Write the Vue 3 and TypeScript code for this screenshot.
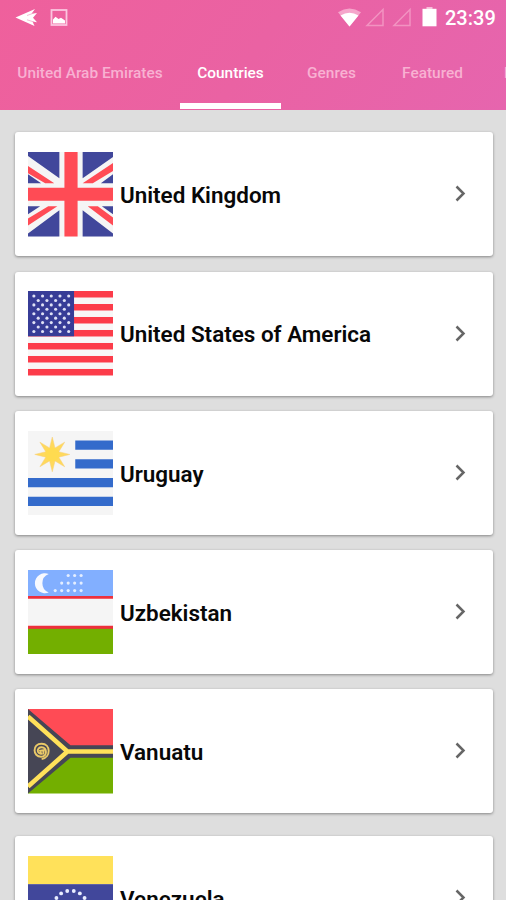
<script setup lang="ts">
interface Country {
  code: string
  name: string
}

interface Dot {
  x: number
  y: number
}

const tabs: string[] = ['United Arab Emirates', 'Countries', 'Genres', 'Featured', 'Popular']
const activeTab = 'Countries'

const countries: Country[] = [
  { code: 'gb', name: 'United Kingdom' },
  { code: 'us', name: 'United States of America' },
  { code: 'uy', name: 'Uruguay' },
  { code: 'uz', name: 'Uzbekistan' },
  { code: 'vu', name: 'Vanuatu' },
  { code: 've', name: 'Venezuela' },
]

const usStars: Dot[] = []
for (let row = 0; row < 9; row++) {
  const odd = row % 2 === 1
  for (let col = 0; col < (odd ? 4 : 5); col++) {
    usStars.push({ x: 5.8 + col * 8.6 + (odd ? 4.3 : 0), y: 5 + row * 4.4 })
  }
}

const uzStars: Dot[] = [3, 4, 5].flatMap((count, row) =>
  Array.from({ length: count }, (_, i) => ({ x: 52.5 - i * 6.4, y: 5.5 + row * 7.5 })),
)

const veStars: Dot[] = Array.from({ length: 12 }, (_, i) => {
  const angle = -Math.PI / 2 + ((i - 5.5) * Math.PI) / 8.2
  return { x: 42 + Math.cos(angle) * 17, y: 51.5 + Math.sin(angle) * 17 }
})

const sunPoints: string = Array.from({ length: 16 }, (_, i) => {
  const radius = i % 2 === 0 ? 17.3 : 7
  const angle = (i * Math.PI) / 8
  return `${(24 + Math.sin(angle) * radius).toFixed(2)},${(23.3 - Math.cos(angle) * radius).toFixed(2)}`
}).join(' ')
</script>

<template>
  <div class="screen">
    <header class="header">
      <div class="status">
        <svg class="status-left" width="56" height="22" viewBox="0 0 56 22">
          <path d="M0.500 10.500 20 2 16.500 6.800 22 6 18 10.700 22 15.200 17.500 14.500 19.500 19Z" fill="#fff" />
          <path d="M12 8.500 19 6M12 12.800 19 15" stroke="#f39cc4" stroke-width=".7" />
          <rect x="36.500" y="3" width="15" height="15" fill="none" stroke="#fbc5df" stroke-width="1.800" />
          <path d="M38 16.500V12.500L40.500 9.700 43.500 12 46 10.800 50 13.500V16.500Z" fill="#fff" />
        </svg>
        <svg class="status-right" width="102" height="22" viewBox="0 0 102 22">
          <path d="M1 5.2Q12.500-2 24 5.200L12.500 19.500Z" fill="#f5a6cb" />
          <path d="M3.500 8.500Q12.500 3 21.500 8.500L12.500 19.500Z" fill="#fff" />
          <path d="M30 18.500H46V2.500ZM57 18.500H73V2.500Z" fill="none" stroke="#f293c1" stroke-width="1.500" />
          <rect x="89.500" y="0" width="6" height="2" fill="#f8bfda" />
          <rect x="85.500" y="1.800" width="14" height="17.500" fill="#fff" />
        </svg>
        <span class="clock">23:39</span>
      </div>
      <nav class="tabs">
        <div v-for="tab in tabs" :key="tab" class="tab" :class="{ active: tab === activeTab }">
          <span>{{ tab }}</span>
        </div>
      </nav>
    </header>

    <main class="list">
      <article v-for="country in countries" :key="country.code" class="card">
        <svg class="flag" viewBox="0 0 84 84" preserveAspectRatio="none">
          <g v-if="country.code === 'gb'">
            <rect width="84" height="84" fill="#f5f5f5" />
            <path
              d="M0 0H31V26L0 4ZM84 0H54V26L84 5ZM3 84H31V58L0 81V84ZM81 84H54V58L84 81V84ZM0 22V31H13ZM84 22V31H72ZM0 62V54H12ZM84 62V54H73Z"
              fill="#41479b"
            />
            <path
              d="M36 0H49V35.500H84V48.500H49V84H36V48.500H0V35.500H36ZM0 14V21L17 31H26ZM84 11V19L64 31H54ZM0 66V73L29 54H20ZM84 65V73L59 54H69Z"
              fill="#ff4b55"
            />
          </g>
          <g v-else-if="country.code === 'us'">
            <rect width="84" height="84" fill="#f8f7f7" />
            <rect v-for="i in 7" :key="i" :y="(i - 1) * 12.92" width="84" height="6.46" fill="#fc3c4a" />
            <rect width="45.500" height="45" fill="#373c97" />
            <circle v-for="(s, i) in usStars" :key="i" :cx="s.x" :cy="s.y" r="1.550" fill="#dfe1f5" />
          </g>
          <g v-else-if="country.code === 'uy'">
            <rect width="84" height="84" fill="#f5f5f5" />
            <path
              d="M46.700 9.330H84V18.670H46.700ZM46.700 28H84V37.330H46.700ZM0 46.670H84V56H0ZM0 65.330H84V74.670H0Z"
              fill="#346bcb"
            />
            <polygon :points="sunPoints" fill="#ffd95c" stroke="#f7cf7a" stroke-width=".500" />
            <circle cx="24" cy="23.300" r="7" fill="#ffdb50" />
          </g>
          <g v-else-if="country.code === 'uz'">
            <rect width="84" height="84" fill="#f5f5f5" />
            <rect width="84" height="26" fill="#82afff" />
            <path d="M0 25.800H84V28.700H0ZM0 55.500H84V58.600H0Z" fill="#ed303c" />
            <rect y="58.500" width="84" height="25.500" fill="#73af00" />
            <path d="M20.500 4A9.900 9.900 0 1 0 20.500 22.300A9.800 9.800 0 0 1 20.500 4Z" fill="#f7f9ff" />
            <circle v-for="(s, i) in uzStars" :key="i" :cx="s.x" :cy="s.y" r="1.550" fill="#e4eeff" />
          </g>
          <g v-else-if="country.code === 'vu'">
            <rect width="84" height="42" fill="#ff4b55" />
            <rect y="42" width="84" height="42" fill="#73af00" />
            <path d="M0 0 42 36H84V48.500H42L0 84Z" fill="#464655" />
            <path d="M0 7.500 39 42.300 0 77M39 42.300H84" fill="none" stroke="#ffe15a" stroke-width="4.500" />
            <path
              d="M13.500 49.800C23 48 22.500 34.500 13.500 34.500C4 34.500 4.500 47.500 13 47.500C19.500 47.500 19 38 13.500 38C8 38 9 45 13 44.500L12 41.500 15.500 41 15 45"
              fill="none"
              stroke="#e9c968"
              stroke-width="1.900"
            />
          </g>
          <g v-else>
            <rect width="84" height="28" fill="#ffe15a" />
            <rect y="28" width="84" height="28" fill="#41479b" />
            <rect y="56" width="84" height="28" fill="#ff4b55" />
            <circle v-for="(s, i) in veStars" :key="i" :cx="s.x" :cy="s.y" r="1.900" fill="#e9edff" />
          </g>
        </svg>
        <span class="name">{{ country.name }}</span>
        <svg class="chevron" width="14" height="18" viewBox="0 0 14 18">
          <path d="M2.500 1.500 9.500 8.500 2.500 15.500" fill="none" stroke="#666" stroke-width="2.500" />
        </svg>
      </article>
    </main>
  </div>
</template>

<style>
body {
  margin: 0;
  overflow: hidden;
}
</style>

<style scoped>
.screen {
  width: 506px;
  height: 900px;
  overflow: hidden;
  display: flex;
  flex-direction: column;
  background: #dedede;
  font-family: Roboto, 'Liberation Sans', sans-serif;
}

.header {
  box-sizing: border-box;
  height: 109.5px;
  flex: none;
  display: flex;
  flex-direction: column;
  background: linear-gradient(125deg, #ef609c 0%, #ea62a3 50%, #e665ae 100%);
}

.status {
  height: 36px;
  display: flex;
  align-items: center;
  padding: 0 11px 0 15px;
  color: #fff;
}

.status-right {
  margin-left: auto;
}

.clock {
  width: 50px;
  margin-left: 6px;
  padding-top: 1px;
  font-size: 20px;
  line-height: 35px;
  font-weight: 500;
  white-space: nowrap;
}

.tabs {
  flex: 1;
  display: flex;
  padding-bottom: 1px;
  overflow: hidden;
}

.tab {
  box-sizing: border-box;
  flex: none;
  width: 101px;
  display: flex;
  justify-content: center;
  padding-top: 27px;
  border-bottom: 6px solid transparent;
  color: #f8b1d2;
  font-size: 15.4px;
  line-height: 20px;
  font-weight: 500;
  white-space: nowrap;
}

.tab:first-child {
  width: 180px;
}

.tab:last-child {
  width: 92px;
  justify-content: flex-start;
  padding-left: 21px;
}

.tab.active {
  color: #fff;
  border-bottom-color: #fff;
}

.list {
  flex: 1;
  display: flex;
  flex-direction: column;
  gap: 15.3px;
  padding: 22.8px 13px 0 14.5px;
}

.card {
  box-sizing: border-box;
  flex: none;
  height: 124px;
  display: flex;
  align-items: center;
  padding: 0 25px 0 13.8px;
  background: #fff;
  border-radius: 3px;
  box-shadow: 0 1px 3px rgba(0, 0, 0, 0.4);
}

.card:last-child {
  margin-top: 7px;
}

.flag {
  width: 85px;
  height: 84.5px;
  flex: none;
}

.name {
  margin-left: 6.7px;
  padding-top: 1.5px;
  color: #080808;
  font-size: 22.45px;
  line-height: 28px;
  font-weight: 600;
  white-space: nowrap;
}

.chevron {
  margin-left: auto;
}
</style>
